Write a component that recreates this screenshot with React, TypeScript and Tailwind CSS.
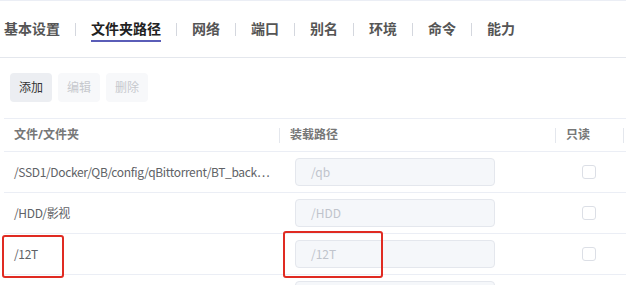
import React from "react";

const tabs = ["基本设置", "文件夹路径", "网络", "端口", "别名", "环境", "命令", "能力"];

const rows = [
  { path: "/SSD1/Docker/QB/config/qBittorrent/BT_back", mount: "/qb", cut: true },
  { path: "/HDD/影视", mount: "/HDD" },
  { path: "/12T", mount: "/12T", marked: true },
  { path: "", mount: "" },
];

function HeaderCell({ label, divider }: { label: string; divider?: boolean }) {
  return (
    <div className="flex items-center h-full">
      {divider && <div className="w-px h-[15px] bg-[#e4e7ed]" />}
      <span className="pl-[10px]">{label}</span>
    </div>
  );
}

export default function App() {
  return (
    <div
      className="w-[626px] h-[285px] overflow-hidden bg-white border-t border-[#ebeef5]"
      style={{ fontFamily: '"Noto Sans", "Noto Sans CJK SC", sans-serif' }}
    >
      {/* tabs */}
      <div className="flex items-center h-[57px] pl-1 border-b border-[#e4e7ed]">
        {tabs.map((t, i) => (
          <React.Fragment key={t}>
            {i > 0 && <div className="w-px h-[13px] bg-[#d4d7de] mx-[15px]" />}
            <div className="relative h-full flex items-center">
              <span
                className={
                  i === 1
                    ? "text-[14px] leading-5 font-bold text-[#222]"
                    : "text-[14px] leading-5 font-bold text-[#555]"
                }
              >
                {t}
              </span>
              {i === 1 && (
                <div className="absolute left-0 right-0 bottom-[15px] h-[2px] bg-[#5a5db8]" />
              )}
            </div>
          </React.Fragment>
        ))}
      </div>

      {/* toolbar */}
      <div className="flex gap-[6px] pl-[10px] pt-[15px]">
        <button className="w-[42px] h-[29px] rounded-[4px] bg-[#eceef2] text-[12px] text-[#333]">添加</button>
        <button className="w-[42px] h-[29px] rounded-[4px] bg-[#f7f8fa] text-[12px] text-[#c6c8cd]">编辑</button>
        <button className="w-[42px] h-[29px] rounded-[4px] bg-[#f7f8fa] text-[12px] text-[#c6c8cd]">删除</button>
      </div>

      {/* table */}
      <div className="ml-1 mt-[16px] border-t border-[#ebeef5]">
        <div className="grid grid-cols-[275px_276px_68px_1fr] h-[33px] border-b border-[#ebeef5] text-[12px] font-bold text-[#777]">
          <HeaderCell label="文件/文件夹" />
          <HeaderCell label="装载路径" divider />
          <HeaderCell label="只读" divider />
          <HeaderCell label="" divider />
        </div>
        {rows.map((r, i) => (
          <div
            key={i}
            className="grid grid-cols-[275px_276px_68px_1fr] h-[41px] border-b border-[#ebeef5]"
            style={{ fontFamily: '"Noto Sans CJK SC", sans-serif' }}
          >
            <div className="relative flex items-center min-w-0 px-[10px]">
              <span className="whitespace-nowrap text-[12px] tracking-[-0.35px] text-[#606266]">
                {r.path}
                {r.cut && "⋯"}
              </span>
              {r.marked && (
                <div className="absolute -left-[2px] top-[1px] w-[62px] h-[43px] border-2 border-[#e02b22] rounded-[3px]" />
              )}
            </div>
            <div className="relative flex items-center pl-[16px]">
              <div className="w-[200px] h-[28px] rounded-[4px] border border-[#e4e7ed] bg-[#f5f7fa] flex items-center pl-[15px] text-[12px] text-[#c0c4cc]">
                {r.mount}
              </div>
              {r.marked && (
                <div className="absolute left-[4px] -top-[3px] w-[100px] h-[47px] border-2 border-[#e02b22] rounded-[3px]" />
              )}
            </div>
            <div className="flex items-center justify-center">
              <div className="w-[14px] h-[14px] rounded-[3px] border border-[#dcdfe6] bg-white" />
            </div>
            <div />
          </div>
        ))}
      </div>
    </div>
  );
}
